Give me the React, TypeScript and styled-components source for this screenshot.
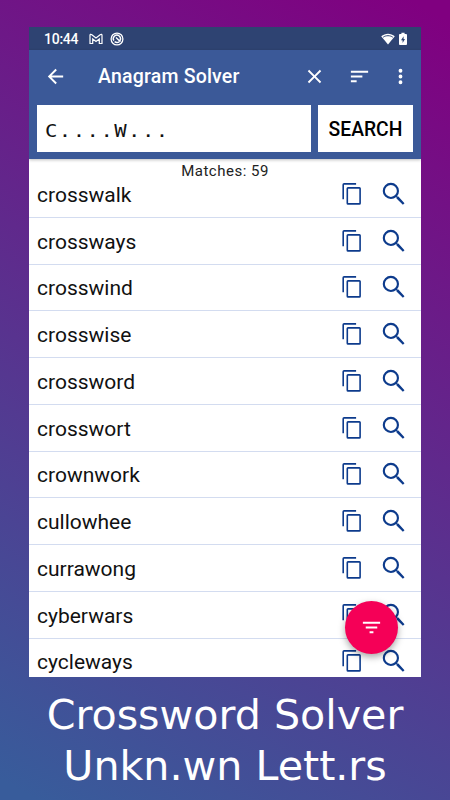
import React from "react";
import styled, { createGlobalStyle } from "styled-components";

const Global = createGlobalStyle`
  *, *::before, *::after { box-sizing: border-box; }
  html, body { margin: 0; padding: 0; }
  body { font-family: Roboto, sans-serif; overflow: hidden; }
`;

const Poster = styled.main`
  width: 450px;
  height: 800px;
  padding: 27px 29px 0;
  overflow: hidden;
  background: linear-gradient(209.4deg, #800080 2%, #385c9b 98%);
`;

const Screen = styled.section`
  position: relative;
  display: flex;
  flex-direction: column;
  width: 392px;
  height: 650px;
  overflow: hidden;
  background: #fff;
`;

const StatusBar = styled.div`
  display: flex;
  flex: none;
  align-items: center;
  height: 23px;
  padding: 0 14px 0 15px;
  color: #fff;
  background: #2e4372;
`;

const Clock = styled.span`
  width: 45px;
  font-size: 14px;
  font-weight: 500;
  letter-spacing: -0.25px;
`;

const StatusIcon = styled.svg<{ $w: number; $gap?: number }>`
  flex: none;
  width: ${(p) => p.$w}px;
  height: 14px;
  margin-right: ${(p) => p.$gap ?? 0}px;
`;

const Spacer = styled.div`
  flex: 1;
`;

const Header = styled.header`
  position: relative;
  z-index: 1;
  flex: none;
  height: 109px;
  color: #fff;
  background: #3b5998;
  box-shadow: 0 1px 3px rgba(0, 0, 0, 0.25);
`;

const Toolbar = styled.div`
  display: flex;
  align-items: center;
  height: 52px;
  padding: 0 9.5px 0 15px;
`;

const Title = styled.h1`
  flex: 1;
  margin: 2px 0 0 31px;
  font-size: 19.5px;
  font-weight: 500;
  letter-spacing: 0.2px;
  line-height: 24px;
`;

const Icon = styled.svg<{ $size: number; $gap?: number }>`
  display: block;
  flex: none;
  width: ${(p) => p.$size}px;
  height: ${(p) => p.$size}px;
  margin-left: ${(p) => p.$gap ?? 0}px;
  fill: currentColor;
`;

const SearchForm = styled.div`
  display: flex;
  gap: 7px;
  height: 47px;
  margin: 3px 8px 0;
`;

const Pattern = styled.div`
  width: 274px;
  padding: 3px 0 0 8px;
  color: #111;
  background: #fff;
  font-family: "DejaVu Sans Mono", monospace;
  font-size: 17.5px;
  letter-spacing: 1.2px;
  line-height: 47px;
`;

const WideText = styled.span`
  display: inline-block;
  transform: scaleX(1.18);
  transform-origin: left center;
`;

const SearchButton = styled.button`
  flex: 1;
  padding: 2px 0 0;
  border: 0;
  color: #000;
  background: #fff;
  font: 500 19.3px Roboto, sans-serif;
`;

const Matches = styled.div`
  flex: none;
  height: 20px;
  margin-bottom: -8px;
  padding-top: 1.5px;
  color: #222;
  font-size: 15px;
  letter-spacing: 0.5px;
  line-height: 20px;
  text-align: center;
`;

const Row = styled.div`
  display: flex;
  flex: none;
  align-items: center;
  height: 46.75px;
  padding: 0 12.5px 0 8px;
  border-bottom: 1px solid #d3dcf0;
  color: #0d3b8c;
`;

const Word = styled.span`
  flex: 1;
  padding-top: 2px;
  color: #111;
  font-size: 21px;
  line-height: 28px;
`;

const FilterButton = styled.button`
  position: absolute;
  z-index: 2;
  right: 23px;
  bottom: 23px;
  display: grid;
  place-items: center;
  width: 53px;
  height: 53px;
  padding: 0;
  border: 0;
  border-radius: 50%;
  color: #fff;
  background: #f50057;
  box-shadow: 0 3px 7px rgba(0, 0, 0, 0.35);
`;

const Caption = styled.p`
  margin: 13px -29px 0;
  color: #fff;
  font-family: "DejaVu Sans", sans-serif;
  font-size: 41.2px;
  line-height: 51px;
  text-align: center;
  white-space: pre-line;
`;

const words = [
  "crosswalk", "crossways", "crosswind", "crosswise", "crossword", "crosswort",
  "crownwork", "cullowhee", "currawong", "cyberwars", "cycleways",
];

const CopyIcon = () => (
  <Icon viewBox="0 0 22 22" $size={22}>
    <path
      d="M2.2 16.3V1.8q0-.9.9-.9h12M7 4.9h11.4q.7 0 .7.7v14.6q0 .7-.7.7H7q-.7 0-.7-.7V5.6q0-.7.7-.7z"
      fill="none"
      stroke="currentColor"
      strokeWidth="1.6"
    />
  </Icon>
);

const SearchIcon = () => (
  <Icon viewBox="0 0 24 24" $size={30} $gap={15.5}>
    <path d="M15.5 14h-.79l-.28-.27A6.47 6.47 0 0 0 16 9.5 6.5 6.5 0 1 0 9.5 16c1.61 0 3.09-.59 4.23-1.57l.27.28v.79l5.1 5.1 1.3-1.3zM9.5 14.3a4.8 4.8 0 1 1 0-9.6 4.8 4.8 0 0 1 0 9.6z" />
  </Icon>
);

export default function App() {
  return (
    <>
      <Global />
      <Poster>
        <Screen>
          <StatusBar>
            <Clock>10:44</Clock>
            <StatusIcon viewBox="0 0 14 14" $w={14} $gap={7} fill="none" stroke="#fff" strokeWidth="1.2">
              <path d="M1 11.5V3.2c0-.8.9-1.1 1.5-.6L7 6l4.5-3.4c.6-.5 1.5-.2 1.5.6v8.3h-2.7V7L7 9.5 3.7 7v4.5z" />
            </StatusIcon>
            <StatusIcon viewBox="0 0 14 14" $w={14} fill="none" stroke="#fff">
              <circle cx="7" cy="7" r="5.9" strokeWidth="1.3" />
              <path d="M3.8 8.6A3.6 3.6 0 1 1 10 8.6M4.6 9.6c1.4 1 3.3 1 4.6.2M6 5.6l4.4 4.2" strokeWidth="1.4" />
            </StatusIcon>
            <Spacer />
            <StatusIcon viewBox="0 0 14 14" $w={14} $gap={4}>
              <path d="M7 12.6.2 4.3C4.1.9 9.9.9 13.8 4.3z" fill="#fff" />
              <path d="M2.2 5.2C5 3.2 9 3.2 11.8 5.2" fill="none" stroke="#2e4372" strokeWidth="1" />
            </StatusIcon>
            <StatusIcon viewBox="0 0 8 14" $w={8}>
              <path d="M2.4.8h3.2V2h1.5q.9 0 .9.9v9.2q0 .9-.9.9H.9Q0 13 0 12.1V2.9Q0 2 .9 2h1.5z" fill="#fff" />
              <path d="M4.6 4.2 2 8.3h1.6v2.8L6 7.1H4.6z" fill="#2e4372" />
            </StatusIcon>
          </StatusBar>
          <Header>
            <Toolbar>
              <Icon viewBox="0 0 24 24" $size={23}>
                <path d="M20 11H7.83l5.59-5.59L12 4l-8 8 8 8 1.41-1.41L7.83 13H20v-2z" />
              </Icon>
              <Title>Anagram Solver</Title>
              <Icon viewBox="0 0 24 24" $size={23}>
                <path d="M19 6.41 17.59 5 12 10.59 6.41 5 5 6.41 10.59 12 5 17.59 6.41 19 12 13.41 17.59 19 19 17.59 13.41 12z" />
              </Icon>
              <Icon viewBox="0 0 24 24" $size={23} $gap={22.5}>
                <path d="M3 18h6v-2H3v2zM3 6v2h18V6H3zm0 7h12v-2H3v2z" />
              </Icon>
              <Icon viewBox="0 0 24 24" $size={23} $gap={17.5}>
                <path d="M12 8a2 2 0 1 0 0-4 2 2 0 0 0 0 4zm0 2a2 2 0 1 0 0 4 2 2 0 0 0 0-4zm0 6a2 2 0 1 0 0 4 2 2 0 0 0 0-4z" />
              </Icon>
            </Toolbar>
            <SearchForm>
              <Pattern>
                <WideText>C....W...</WideText>
              </Pattern>
              <SearchButton>SEARCH</SearchButton>
            </SearchForm>
          </Header>
          <Matches>Matches: 59</Matches>
          {words.map((word) => (
            <Row key={word}>
              <Word>{word}</Word>
              <CopyIcon />
              <SearchIcon />
            </Row>
          ))}
          <FilterButton aria-label="Filter">
            <Icon viewBox="0 0 24 24" $size={23}>
              <path d="M10 18h4v-2h-4v2zM3 6v2h18V6H3zm3 7h12v-2H6v2z" />
            </Icon>
          </FilterButton>
        </Screen>
        <Caption>{"Crossword Solver\nUnkn.wn Lett.rs"}</Caption>
      </Poster>
    </>
  );
}
